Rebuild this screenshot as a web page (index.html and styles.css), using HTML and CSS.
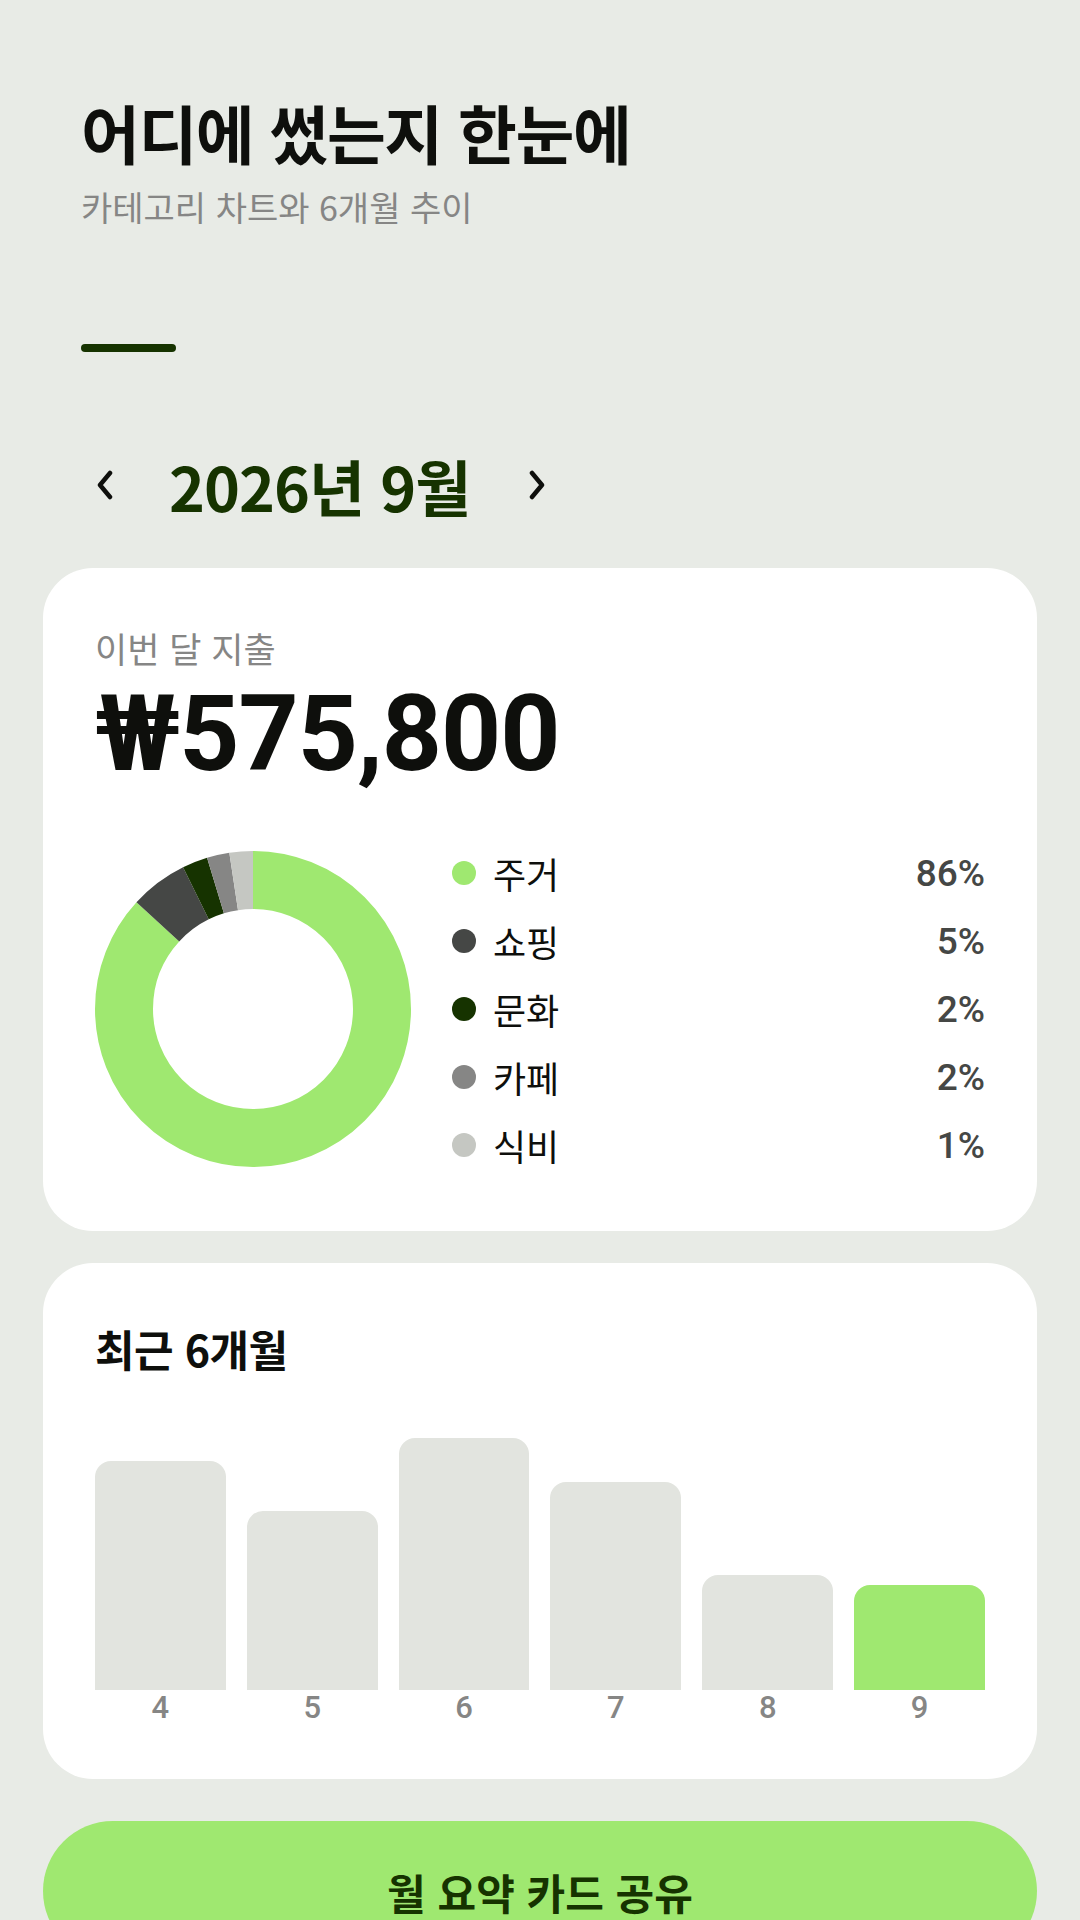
FILE: index.html
```html
<!DOCTYPE html>
<html lang="ko">
<head>
    <meta charset="UTF-8">
    <meta name="viewport" content="width=device-width, initial-scale=1.0">
    <title>어디에 썼는지 한눈에</title>
    <link rel="stylesheet" href="styles.css">
</head>
<body>
    <div class="page">
        <div class="header">
            <h1 class="title">어디에 썼는지 한눈에</h1>
            <p class="subtitle">카테고리 차트와 6개월 추이</p>
            <div class="accent-bar"></div>
            <div class="month-nav">
                <button class="nav-button" aria-label="이전 달">
                    <svg width="20" height="30" viewBox="0 0 20 30"><path d="M15 3 L5 15 L15 27" fill="none" stroke="#0e0f0c" stroke-width="4.5" stroke-linecap="round" stroke-linejoin="round"/></svg>
                </button>
                <div class="month-label">2026년 9월</div>
                <button class="nav-button" aria-label="다음 달">
                    <svg width="20" height="30" viewBox="0 0 20 30"><path d="M5 3 L15 15 L5 27" fill="none" stroke="#0e0f0c" stroke-width="4.5" stroke-linecap="round" stroke-linejoin="round"/></svg>
                </button>
            </div>
        </div>

        <div class="card summary-card">
            <div class="card-label">이번 달 지출</div>
            <div class="amount">₩575,800</div>
            <div class="breakdown">
                <svg class="donut" width="316" height="316" viewBox="0 0 316 316">
                    <g transform="rotate(-90 158 158)">
                        <circle cx="158" cy="158" r="129" fill="none" stroke="#9fe870" stroke-width="58" pathLength="100" stroke-dasharray="86.8 100" stroke-dashoffset="0"/>
                        <circle cx="158" cy="158" r="129" fill="none" stroke="#454745" stroke-width="58" pathLength="100" stroke-dasharray="5.9 100" stroke-dashoffset="-86.8"/>
                        <circle cx="158" cy="158" r="129" fill="none" stroke="#163300" stroke-width="58" pathLength="100" stroke-dasharray="2.6 100" stroke-dashoffset="-92.7"/>
                        <circle cx="158" cy="158" r="129" fill="none" stroke="#868685" stroke-width="58" pathLength="100" stroke-dasharray="2.3 100" stroke-dashoffset="-95.3"/>
                        <circle cx="158" cy="158" r="129" fill="none" stroke="#c5c7c2" stroke-width="58" pathLength="100" stroke-dasharray="2.4 100" stroke-dashoffset="-97.6"/>
                    </g>
                </svg>
                <ul class="legend">
                    <li class="legend-row"><span class="dot dot-home"></span><span class="legend-name">주거</span><span class="legend-pct">86%</span></li>
                    <li class="legend-row"><span class="dot dot-shop"></span><span class="legend-name">쇼핑</span><span class="legend-pct">5%</span></li>
                    <li class="legend-row"><span class="dot dot-culture"></span><span class="legend-name">문화</span><span class="legend-pct">2%</span></li>
                    <li class="legend-row"><span class="dot dot-cafe"></span><span class="legend-name">카페</span><span class="legend-pct">2%</span></li>
                    <li class="legend-row"><span class="dot dot-food"></span><span class="legend-name">식비</span><span class="legend-pct">1%</span></li>
                </ul>
            </div>
        </div>

        <div class="card trend-card">
            <div class="card-title">최근 6개월</div>
            <div class="bars">
                <div class="bar-col"><div class="bar" style="height: 229px"></div><span class="bar-label">4</span></div>
                <div class="bar-col"><div class="bar" style="height: 179px"></div><span class="bar-label">5</span></div>
                <div class="bar-col"><div class="bar" style="height: 252px"></div><span class="bar-label">6</span></div>
                <div class="bar-col"><div class="bar" style="height: 208px"></div><span class="bar-label">7</span></div>
                <div class="bar-col"><div class="bar" style="height: 115px"></div><span class="bar-label">8</span></div>
                <div class="bar-col"><div class="bar current" style="height: 105px"></div><span class="bar-label">9</span></div>
            </div>
        </div>

        <button class="share-button">월 요약 카드 공유</button>
    </div>
</body>
</html>
```

FILE: styles.css
```css
body {
    margin: 0;
    padding: 0;
    background-color: #e8ebe6;
    font-family: "Noto Sans CJK KR", "Noto Sans", sans-serif;
    color: #0e0f0c;
}
.page {
    padding: 90px 43px 0;
    height: 1920px;
    box-sizing: border-box;
    overflow: hidden;
}
.header {
    padding-left: 38px;
}
.title {
    margin: 0;
    font-size: 64px;
    line-height: 83px;
    font-weight: 700;
    letter-spacing: -1.5px;
}
.subtitle {
    margin: 11px 0 0;
    font-size: 34px;
    line-height: 45px;
    color: #868685;
}
.accent-bar {
    width: 95px;
    height: 8px;
    margin-top: 115px;
    border-radius: 4px;
    background-color: #163300;
}
.month-nav {
    display: flex;
    align-items: center;
    height: 80px;
    margin-top: 93px;
}
.nav-button {
    width: 48px;
    height: 60px;
    padding: 0;
    border: none;
    background: none;
    display: flex;
    justify-content: center;
    align-items: center;
    cursor: pointer;
}
.month-label {
    margin: 0 43px 0 40px;
    font-size: 61px;
    font-weight: 700;
    color: #163300;
    letter-spacing: -1px;
}
.card {
    background-color: #ffffff;
    border-radius: 50px;
}
.summary-card {
    margin-top: 43px;
    padding: 56px 52px 52px;
}
.card-label {
    font-size: 35px;
    line-height: 48px;
    color: #868685;
}
.amount {
    margin-top: 10px;
    font-family: Roboto, "Noto Sans CJK KR", sans-serif;
    font-size: 105px;
    line-height: 105px;
    font-weight: 700;
    letter-spacing: -1px;
}
.breakdown {
    display: flex;
    align-items: center;
    margin-top: 52px;
}
.donut {
    display: block;
    flex-shrink: 0;
}
.legend {
    flex: 1;
    margin: 0 0 0 41px;
    padding: 0;
    list-style: none;
}
.legend-row {
    display: flex;
    align-items: center;
    height: 68px;
}
.dot {
    width: 24px;
    height: 24px;
    border-radius: 50%;
    margin-right: 17px;
}
.dot-home { background-color: #9fe870; }
.dot-shop { background-color: #454745; }
.dot-culture { background-color: #163300; }
.dot-cafe { background-color: #868685; }
.dot-food { background-color: #c5c7c2; }
.legend-name {
    flex: 1;
    font-size: 36px;
    color: #0e0f0c;
}
.legend-pct {
    font-family: Roboto, sans-serif;
    font-size: 37px;
    font-weight: 500;
    color: #454745;
}
.trend-card {
    margin-top: 32px;
    padding: 60px 52px 53px;
}
.card-title {
    font-size: 43px;
    line-height: 50px;
    font-weight: 700;
    letter-spacing: -0.5px;
}
.bars {
    display: grid;
    grid-template-columns: repeat(6, 1fr);
    column-gap: 21px;
    margin-top: 59px;
}
.bar-col {
    display: flex;
    flex-direction: column;
    justify-content: flex-end;
    height: 294px;
}
.bar {
    background-color: #e2e4df;
    border-radius: 16px 16px 0 0;
}
.bar.current {
    background-color: #9fe870;
}
.bar-label {
    font-family: Roboto, sans-serif;
    font-size: 31px;
    line-height: 36px;
    font-weight: 500;
    text-align: center;
    color: #868685;
}
.share-button {
    display: block;
    width: 100%;
    height: 140px;
    margin-top: 42px;
    border: none;
    border-radius: 70px;
    background-color: #9fe870;
    color: #163300;
    font-family: "Noto Sans CJK KR", sans-serif;
    font-size: 42px;
    font-weight: 700;
    cursor: pointer;
}
```
